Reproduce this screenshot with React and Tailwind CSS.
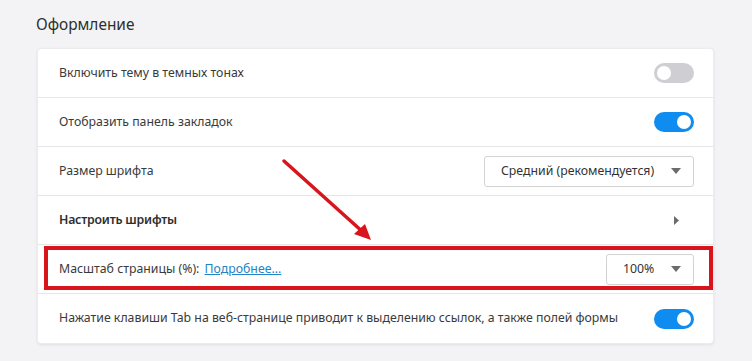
import React from "react";

const Toggle = ({ on }) => (
  <div
    className={
      "w-[40px] h-[20px] rounded-full flex items-center px-[3px] " +
      (on ? "bg-[#0f8cf0] justify-end" : "bg-[#cfcfd3] justify-start")
    }
  >
    <div className="w-[14px] h-[14px] rounded-full bg-white" />
  </div>
);

const Caret = () => (
  <svg width="10" height="6" viewBox="0 0 10 6">
    <path d="M0 0 L10 0 L5 6 Z" fill="#6b6b6b" />
  </svg>
);

const Select = ({ value, width }) => (
  <div
    className={
      "h-[31px] border border-[#d3d3d3] rounded-[3px] flex items-center justify-between pl-[16px] pr-[12px] text-[#333] " +
      width
    }
  >
    <span>{value}</span>
    <Caret />
  </div>
);

const Row = ({ children, last }) => (
  <div
    className={
      "h-[49px] flex items-center justify-between pl-[21px] pr-[19px] " +
      (last ? "" : "border-b border-[#e6e6e8]")
    }
  >
    {children}
  </div>
);

export default function App() {
  return (
    <div
      className="min-h-[361px] bg-[#f3f3f5] pt-[14px] pl-[37px] text-[12.3px] text-[#3a3a3a]"
      style={{ fontFamily: '"Noto Sans", "Open Sans", sans-serif' }}
    >
      <h2 className="text-[15.4px] leading-[22px] text-[#2e2e2e] -ml-[1px]">Оформление</h2>
      <div className="relative mt-[12px] w-[677px] bg-white rounded-[4px] shadow-[0_1px_3px_rgba(0,0,0,0.08)] border border-[#ececee]">
        <Row>
          <span>Включить тему в темных тонах</span>
          <Toggle on={false} />
        </Row>
        <Row>
          <span>Отобразить панель закладок</span>
          <Toggle on />
        </Row>
        <Row>
          <span>Размер шрифта</span>
          <Select value="Средний (рекомендуется)" width="w-[210px]" />
        </Row>
        <Row>
          <span className="font-semibold text-[#2e2e2e] tracking-[-0.2px]">Настроить шрифты</span>
          <svg width="6" height="9" viewBox="0 0 6 9" className="mr-[14px]">
            <path d="M0 0 L5 4.5 L0 9 Z" fill="#6b6b6b" />
          </svg>
        </Row>
        <Row>
          <span>
            Масштаб страницы (%):{" "}
            <a href="#" className="ml-[2px] text-[#2483c5] underline">
              Подробнее...
            </a>
          </span>
          <Select value="100%" width="w-[88px]" />
        </Row>
        <Row last>
          <span>Нажатие клавиши Tab на веб-странице приводит к выделению ссылок, а также полей формы</span>
          <Toggle on />
        </Row>

        {/* annotation: red frame */}
        <div className="absolute left-[6px] top-[197px] w-[669px] h-[44px] border-[4px] border-[#d8141c] pointer-events-none" />
        {/* annotation: arrow */}
        <svg
          className="absolute left-[240px] top-[105px] pointer-events-none"
          width="100"
          height="90"
          viewBox="0 0 100 90"
        >
          <line x1="6" y1="7" x2="86" y2="79" stroke="#d8141c" strokeWidth="3.5" strokeLinecap="round" />
          <path d="M93 86 L76 80 L87 70 Z" fill="#d8141c" />
        </svg>
      </div>
    </div>
  );
}
